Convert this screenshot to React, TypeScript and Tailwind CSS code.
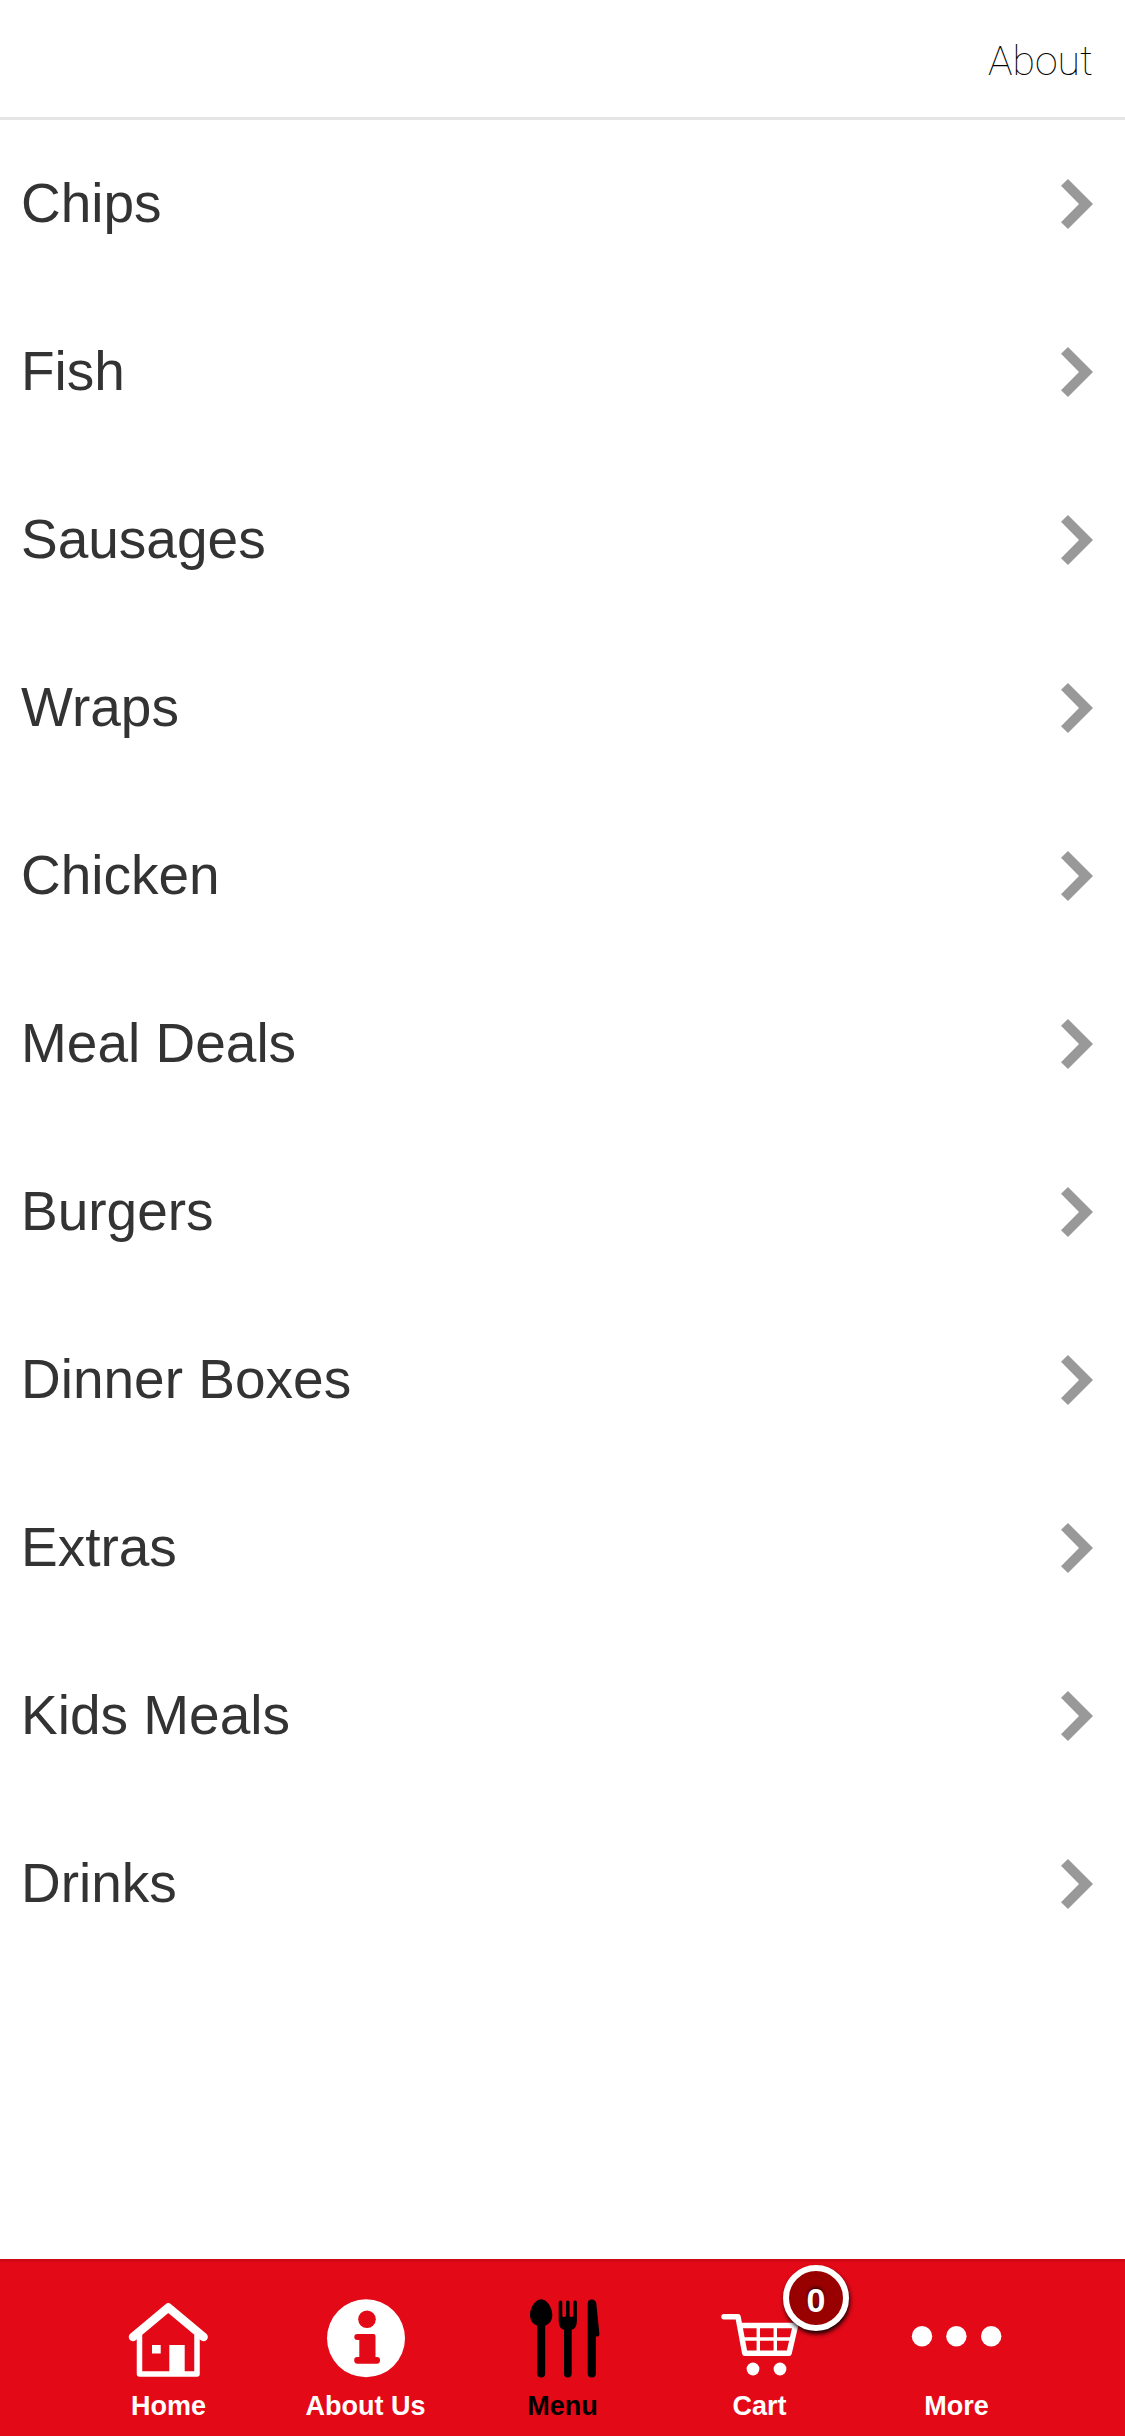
import React, { useState } from "react";
import clsx from "clsx";

const categories = [
  "Chips",
  "Fish",
  "Sausages",
  "Wraps",
  "Chicken",
  "Meal Deals",
  "Burgers",
  "Dinner Boxes",
  "Extras",
  "Kids Meals",
  "Drinks",
];

function Icon({ children }: { children: React.ReactNode }) {
  return (
    <svg
      viewBox="0 0 97 80"
      className="h-[80px] w-[97px]"
      fill="currentColor"
      aria-hidden="true"
    >
      {children}
    </svg>
  );
}

function HomeIcon() {
  return (
    <Icon>
      <g fill="none" stroke="currentColor" strokeLinejoin="round">
        <path d="M19.5 36V75H77V36" strokeWidth="5.5" />
        <path
          d="M13 38L48.3 8.5L83.6 38"
          strokeWidth="8.5"
          strokeLinecap="round"
        />
      </g>
      <path d="M32 46h8.7v8.5H32zM49.3 46h15.4v29H49.3z" />
    </Icon>
  );
}

function InfoIcon() {
  return (
    <Icon>
      <circle cx="49" cy="39.3" r="39" />
      <g className="text-[#e30917]" fill="currentColor">
        <circle cx="50" cy="20.3" r="8.8" />
        <path d="M40.3 35H56.5Q58.5 35 58.5 37V58H60Q63 58 63 61.3T60 64.7H40.3Q37.2 64.7 37.2 61.3T40.3 58H42.3V41H40.3Q37.3 41 37.3 38T40.3 35Z" />
      </g>
    </Icon>
  );
}

function CutleryIcon() {
  return (
    <Icon>
      <path d="M27.2 0.2C33.5 0.2 38.3 9 38.3 16C38.3 21.5 35.5 25 31.2 26.6V74.5Q31.2 78.5 27.2 78.5T23.2 74.5V26.6C18.9 25 16 21.5 16 16C16 9 20.9 0.2 27.2 0.2Z" />
      <path d="M44.7 3.2a1.8 1.8 0 0 1 3.6 0V16.5Q48.3 18 50 18T52 16.5V3.2a1.8 1.8 0 0 1 3.6 0V16.5Q55.6 18 57.3 18T59.3 16.5V3.2a1.8 1.8 0 0 1 3.6 0V21.5Q62.9 29.5 57.7 30.8V74.5Q57.7 78.5 53.8 78.5T50 74.5V30.8Q44.7 29.5 44.7 21.5Z" />
      <path d="M73.7 5Q73.7 0.6 77.8 0.6C80.5 0.6 82 2.4 82.4 5L85.4 35Q85.4 37.6 82.8 37.6H81.9V74.5Q81.9 78.5 77.8 78.5T73.7 74.5Z" />
    </Icon>
  );
}

function CartIcon() {
  return (
    <Icon>
      <g fill="none" stroke="currentColor" strokeLinejoin="round">
        <path
          d="M13 17.7H27L33.8 54.3H78L84.5 26.5H29"
          strokeWidth="5.5"
          strokeLinecap="round"
        />
        <path d="M31 40H81M47.3 27V54M64.3 27V54" strokeWidth="3.4" />
      </g>
      <circle cx="42" cy="70" r="6.4" />
      <circle cx="69" cy="70" r="6.4" />
    </Icon>
  );
}

function MoreIcon() {
  return (
    <Icon>
      <circle cx="14" cy="37.3" r="10.2" />
      <circle cx="48.4" cy="37.3" r="10.2" />
      <circle cx="83.2" cy="37.3" r="10.2" />
    </Icon>
  );
}

const tabs = [
  { label: "Home", icon: HomeIcon },
  { label: "About Us", icon: InfoIcon },
  { label: "Menu", icon: CutleryIcon },
  { label: "Cart", icon: CartIcon, badge: 0 },
  { label: "More", icon: MoreIcon },
];

export default function App() {
  const [activeTab, setActiveTab] = useState("Menu");

  return (
    <div className="flex min-h-screen flex-col bg-white font-['Liberation_Sans',Arial,sans-serif]">
      <header className="flex h-[120px] items-center justify-end border-b-3 border-[#e5e5e5] px-8 pt-1">
        <button
          type="button"
          className="font-['Roboto',sans-serif] text-[41px] leading-12 font-thin text-black"
        >
          About
        </button>
      </header>

      <main className="flex-1">
        <ul>
          {categories.map((name) => (
            <li key={name}>
              <a
                href="#"
                className="flex h-[168px] items-center justify-between pr-8 pl-[21px] text-[55px] leading-16 text-[#333333]"
              >
                <span className="pb-0.5">{name}</span>
                <svg
                  viewBox="0 0 32 50"
                  className="h-[50px] w-8 text-[#999999]"
                  fill="currentColor"
                  aria-hidden="true"
                >
                  <path d="M7 0L32 25L7 50L0 43.2L18 25L0 6.8Z" />
                </svg>
              </a>
            </li>
          ))}
        </ul>
      </main>

      <nav className="flex border-t-3 border-[#cf0814] bg-[#e30917] px-[70px] pt-[37px] pb-[14px]">
        {tabs.map(({ label, icon: TabIcon, badge }) => (
          <button
            key={label}
            type="button"
            onClick={() => setActiveTab(label)}
            className={clsx(
              "flex flex-1 flex-col items-center gap-[11px] text-[27px] leading-8 font-bold",
              activeTab === label ? "text-black" : "text-white"
            )}
          >
            <span className="relative">
              <TabIcon />
              {badge !== undefined && (
                <span className="absolute -top-[34px] left-[72px] flex size-[66px] items-center justify-center rounded-full border-6 border-white bg-[#990000] pt-1 text-[34px] text-white shadow-[1px_3px_4px_rgba(0,0,0,0.9)] [text-shadow:0_-2px_3px_rgba(0,0,0,0.6)]">
                  {badge}
                </span>
              )}
            </span>
            {label}
          </button>
        ))}
      </nav>
    </div>
  );
}
